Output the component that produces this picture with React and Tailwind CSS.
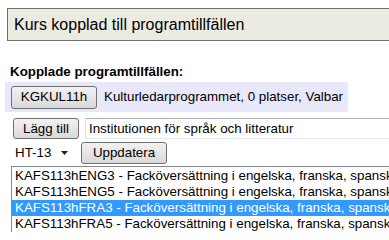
const ROWS = [
  { code: "KAFS113hENG3", name: "Facköversättning i engelska, franska, spanska, tyska" },
  { code: "KAFS113hENG5", name: "Facköversättning i engelska, franska, spanska, tyska" },
  { code: "KAFS113hFRA3", name: "Facköversättning i engelska, franska, spanska, tyska", selected: true },
  { code: "KAFS113hFRA5", name: "Facköversättning i engelska, franska, spanska, tyska" },
];

function WinButton({ children, className = "" }) {
  return (
    <button
      type="button"
      className={`rounded-[3px] border border-[#707070] bg-gradient-to-b from-[#f2f2f2] to-[#d9d9d9] text-[13.33px] leading-none text-black ${className}`}
    >
      {children}
    </button>
  );
}

export default function App() {
  return (
    <div className="h-[232px] w-[389px] overflow-hidden bg-white font-['Liberation_Sans',Arial,sans-serif] text-black">
      <div className="ml-[7px] mt-[8px] flex h-[33px] items-center whitespace-nowrap border border-r-0 border-[#6e6e6e] bg-[#ecebe1] pl-[6px] text-[16px]">
        Kurs kopplad till programtillfällen
      </div>

      <div className="ml-[10px] mt-[23px] text-[13.33px] font-bold leading-[15px]">Kopplade programtillfällen:</div>

      <div className="ml-[5px] mt-[3px] flex h-[30px] w-[343px] items-center gap-[7px] bg-[#e8e8fa] pl-[6px] text-[13.33px]">
        <WinButton className="h-[23px] w-[86px]">KGKUL11h</WinButton>
        <span className="whitespace-nowrap">Kulturledarprogrammet, 0 platser, Valbar</span>
      </div>

      <div className="ml-[13px] mt-[6px] flex items-center gap-[6px]">
        <WinButton className="h-[21px] w-[66px]">Lägg till</WinButton>
        <div className="flex h-[21px] flex-1 items-center whitespace-nowrap border-y border-l border-t-[#abadb3] border-b-[#e3e9ef] border-l-[#e2e3ea] pl-[3px] text-[13.33px]">
          Institutionen för språk och litteratur
        </div>
      </div>

      <div className="ml-[12px] mt-[3px] flex items-center gap-[5px]">
        <div className="flex h-[22px] w-[64px] items-center justify-between pl-[3px] pr-[8px] text-[13.33px]">
          <span>HT-13</span>
          <svg width="7" height="4" viewBox="0 0 7 4">
            <path d="M0 0h7L3.5 4z" fill="#222" />
          </svg>
        </div>
        <WinButton className="h-[22px] w-[86px]">Uppdatera</WinButton>
      </div>

      <div className="ml-[11px] mt-[2px] border-l border-t border-[#828790] pt-[1px]">
        {ROWS.map((r) => (
          <div
            key={r.code}
            className={`h-[16px] whitespace-nowrap pl-[3px] text-[13.33px] leading-[16px] ${r.selected ? "bg-[#3399ff] text-white" : ""}`}
          >
            {r.code} - {r.name}
          </div>
        ))}
      </div>
    </div>
  );
}
